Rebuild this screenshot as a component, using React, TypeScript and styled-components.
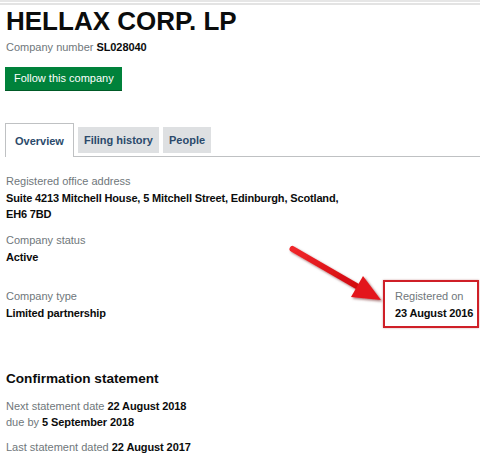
import React from "react";
import styled, { createGlobalStyle } from "styled-components";

const GlobalStyle = createGlobalStyle`
  html, body {
    margin: 0;
    padding: 0;
    background: #ffffff;
    font-family: "Liberation Sans", Arial, sans-serif;
    color: #0b0c0c;
  }
  * { box-sizing: border-box; }
`;

const Page = styled.div`
  position: relative;
  width: 480px;
  height: 465px;
  overflow: hidden;
  background: #fff;
`;

const TopRule = styled.div`
  height: 5px;
  border-top: 2px solid #e6e6e6;
  border-bottom: 2px solid #e3e3e3;
  margin-bottom: 1px;
`;

const Main = styled.div`
  padding: 0 0 0 6px;
`;

const Title = styled.h1`
  margin: 0;
  font-size: 26px;
  line-height: 30px;
  font-weight: 700;
  color: #0b0c0c;
`;

const Meta = styled.p`
  margin: 3px 0 0;
  font-size: 11px;
  line-height: 16px;
  color: #6f777b;
`;

const Strong = styled.strong`
  font-weight: 700;
  color: #0b0c0c;
  letter-spacing: -0.1px;
`;

const FollowButton = styled.button`
  display: block;
  margin: 12px 0 0 -1px;
  height: 23px;
  padding: 0 8px 0 9px;
  border: none;
  border-radius: 0;
  background: #00823b;
  box-shadow: 0 1px 0 #005a27;
  color: #fff;
  font-family: inherit;
  font-size: 11px;
  line-height: 23px;
  cursor: pointer;
`;

const TabList = styled.div`
  display: flex;
  align-items: flex-end;
  gap: 4px;
  margin: 33px 0 0 -1px;
  border-bottom: 1px solid #bfc1c3;
`;

const Tab = styled.div<{ $active?: boolean; $pad: number }>`
  display: flex;
  align-items: center;
  font-size: 11px;
  font-weight: 700;
  color: #2b4a6b;
  padding: 0 ${(p) => p.$pad}px;
  ${(p) =>
    p.$active
      ? `
    height: 34px;
    background: #fff;
    border: 1px solid #bfc1c3;
    border-bottom: none;
    margin-bottom: -1px;
    padding-top: 1px;
  `
      : `
    height: 26px;
    background: #dee0e2;
    margin-bottom: 3px;
  `}
`;

const Summary = styled.div`
  padding-top: 16px;
`;

const Field = styled.div<{ $gap?: number }>`
  margin-top: ${(p) => p.$gap ?? 0}px;
`;

const Label = styled.div`
  font-size: 11px;
  line-height: 16px;
  color: #6f777b;
`;

const Value = styled.div<{ $max?: number }>`
  margin-top: 1px;
  font-size: 11px;
  line-height: 16px;
  font-weight: 700;
  letter-spacing: -0.15px;
  color: #0b0c0c;
  max-width: ${(p) => (p.$max ? `${p.$max}px` : "none")};
`;

const SplitRow = styled.div`
  display: flex;
  justify-content: space-between;
  align-items: flex-start;
  margin-top: 15px;
  padding-right: 1px;
`;

const Highlight = styled.div`
  width: 96px;
  border: 2px solid #cf1f27;
  box-shadow: 0 0 2px rgba(120, 0, 0, 0.35);
  padding: 6px 0 5px 10px;
  margin-left: 0;
`;

const LeftField = styled.div`
  padding-top: 8px;
`;

const SectionTitle = styled.h2`
  margin: 42px 0 0;
  font-size: 13.6px;
  line-height: 18px;
  font-weight: 700;
  color: #0b0c0c;
`;

const Para = styled.p<{ $gap: number }>`
  margin: ${(p) => p.$gap}px 0 0;
  font-size: 11px;
  line-height: 16px;
  color: #6f777b;
`;

const ArrowLayer = styled.svg`
  position: absolute;
  left: 0;
  top: 0;
  width: 480px;
  height: 465px;
  pointer-events: none;
`;

export default function App() {
  return (
    <Page>
      <GlobalStyle />
      <TopRule />
      <Main>
        <Title>HELLAX CORP. LP</Title>
        <Meta>
          Company number <Strong>SL028040</Strong>
        </Meta>
        <FollowButton>Follow this company</FollowButton>

        <TabList>
          <Tab $active $pad={9}>Overview</Tab>
          <Tab $pad={6}>Filing history</Tab>
          <Tab $pad={6}>People</Tab>
        </TabList>

        <Summary>
          <Field>
            <Label>Registered office address</Label>
            <Value $max={345}>
              Suite 4213 Mitchell House, 5 Mitchell Street, Edinburgh, Scotland, EH6 7BD
            </Value>
          </Field>
          <Field $gap={10}>
            <Label>Company status</Label>
            <Value>Active</Value>
          </Field>
          <SplitRow>
            <LeftField>
              <Label>Company type</Label>
              <Value>Limited partnership</Value>
            </LeftField>
            <Highlight>
              <Label>Registered on</Label>
              <Value>23 August 2016</Value>
            </Highlight>
          </SplitRow>
        </Summary>

        <SectionTitle>Confirmation statement</SectionTitle>
        <Para $gap={10}>
          Next statement date <Strong>22 August 2018</Strong>
          <br />
          due by <Strong>5 September 2018</Strong>
        </Para>
        <Para $gap={9}>
          Last statement dated <Strong>22 August 2017</Strong>
        </Para>
      </Main>

      <ArrowLayer viewBox="0 0 480 465">
        <defs>
          <filter id="arrowShadow" x="-20%" y="-20%" width="140%" height="140%">
            <feDropShadow dx="1.5" dy="1.5" stdDeviation="1.2" floodColor="#5a0000" floodOpacity="0.55" />
          </filter>
          <linearGradient id="arrowFill" x1="0" y1="0" x2="1" y2="1">
            <stop offset="0" stopColor="#f0262a" />
            <stop offset="1" stopColor="#d0080e" />
          </linearGradient>
        </defs>
        <g filter="url(#arrowShadow)">
          <line x1="292.5" y1="249" x2="360" y2="288" stroke="url(#arrowFill)" strokeWidth="6" strokeLinecap="round" />
          <polygon points="381,300 351,297 363,276" fill="#e3161c" />
        </g>
      </ArrowLayer>
    </Page>
  );
}
